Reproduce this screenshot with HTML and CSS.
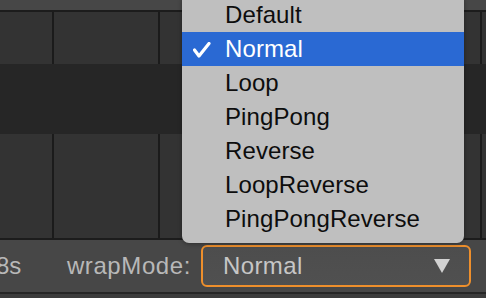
FILE: index.html
```html
<!DOCTYPE html>
<html>
<head>
<meta charset="utf-8">
<link rel="stylesheet" href="styles.css">
</head>
<body>
<div class="app">
  <div class="topband"></div>
  <div class="cells row1">
    <div class="cell c1"></div>
    <div class="cell c2"></div>
    <div class="cell c3"></div>
    <div class="cell c4"></div>
  </div>
  <div class="darkrow"></div>
  <div class="cells row2">
    <div class="cell c1"></div>
    <div class="cell c2"></div>
    <div class="cell c3"></div>
    <div class="cell c4"></div>
  </div>
  <div class="bar">
    <span class="time">8s</span>
    <div class="field">
      <span class="label">wrapMode:</span>
      <div class="select">
        <span class="value">Normal</span>
        <svg class="arrow" width="16" height="14" viewBox="0 0 16 14"><polygon points="0,0 16,0 8,14" fill="#d2d2d2"/></svg>
      </div>
    </div>
  </div>
  <div class="foot"></div>

  <ul class="menu">
    <li class="item"><span class="check"></span><span>Default</span></li>
    <li class="item selected"><span class="check"><svg width="18" height="16" viewBox="0 0 18 16"><polyline points="1.5,8 6,14 16,1.5" fill="none" stroke="#fff" stroke-width="3.2" stroke-linecap="round" stroke-linejoin="round"/></svg></span><span>Normal</span></li>
    <li class="item"><span class="check"></span><span>Loop</span></li>
    <li class="item"><span class="check"></span><span>PingPong</span></li>
    <li class="item"><span class="check"></span><span>Reverse</span></li>
    <li class="item"><span class="check"></span><span>LoopReverse</span></li>
    <li class="item"><span class="check"></span><span>PingPongReverse</span></li>
  </ul>
</div>
</body>
</html>
```

FILE: styles.css
```css
html, body {
  margin: 0;
  padding: 0;
  background: #3a3a3a;
  overflow: hidden;
}
.app {
  position: relative;
  width: 486px;
  height: 298px;
  font-family: "Liberation Sans", Arial, sans-serif;
  display: flex;
  flex-direction: column;
}
.topband {
  height: 10px;
  background: #474747;
}
.cells {
  display: flex;
  background: #1e1e1e;
}
.row1 {
  height: 52px;
  border-top: 2px solid #1c1c1c;
}
.row2 {
  height: 104px;
  border-bottom: 2px solid #1c1c1c;
}
.cell {
  background: #333333;
  border-right: 2px solid #1b1b1b;
}
.c1 { width: 52px; }
.c2 { width: 104px; }
.c3 { width: 320px; }
.c4 { flex: 1; border-right: none; }
.darkrow {
  height: 70px;
  background: #262626;
}
.bar {
  height: 52px;
  background: #474747;
  display: flex;
  align-items: center;
  color: #b8b8b8;
  font-size: 24px;
}
.time {
  margin-left: -4px;
}
.field {
  margin-left: auto;
  margin-right: 15px;
  display: flex;
  align-items: center;
  gap: 10px;
}
.label {
  letter-spacing: 0.6px;
}
.select {
  box-sizing: border-box;
  width: 270px;
  height: 42px;
  border: 2px solid #ee8f2c;
  border-radius: 6px;
  background: linear-gradient(#4d4d4d, #505050);
  display: flex;
  align-items: center;
  padding: 0 19px 0 20px;
  color: #c6c6c6;
  letter-spacing: 0.4px;
}
.arrow {
  margin-left: auto;
  display: block;
}
.foot {
  height: 2px;
  background: #262626;
  border-bottom: 4px solid #3c3c3c;
}
.menu {
  position: absolute;
  left: 182px;
  top: -2px;
  width: 282px;
  margin: 0;
  padding: 0 0 7px 0;
  list-style: none;
  background: #bfbfbf;
  border-radius: 0 0 7px 7px;
  box-shadow: 0 1px 4px rgba(0,0,0,0.35);
}
.item {
  height: 34px;
  line-height: 34px;
  display: flex;
  align-items: center;
  font-size: 24px;
  color: #0d0d0d;
  letter-spacing: 0.1px;
}
.item.selected {
  background: #2a69d3;
  color: #ffffff;
}
.check {
  width: 43px;
  flex: none;
  display: flex;
  align-items: center;
  padding-left: 11px;
  box-sizing: border-box;
}
.check svg {
  display: block;
  margin-top: 1px;
}
```
